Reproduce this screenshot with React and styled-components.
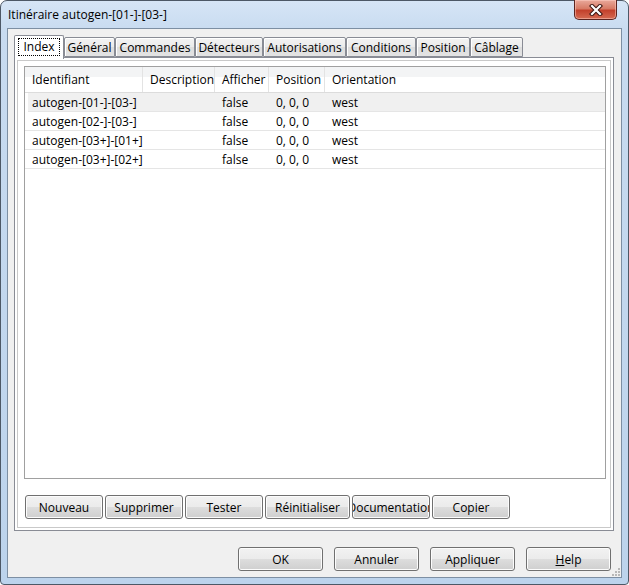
import React from "react";
import styled, { createGlobalStyle } from "styled-components";

const GlobalStyle = createGlobalStyle`
  html, body {
    margin: 0;
    padding: 0;
    background: #ffffff;
  }
  body {
    font-family: "Open Sans", "Liberation Sans", sans-serif;
    font-size: 11.5px;
    color: #000;
  }
  * { box-sizing: border-box; }
`;

const Window = styled.div`
  position: relative;
  width: 629px;
  height: 585px;
  display: flex;
  flex-direction: column;
  border: 1px solid #4d5866;
  border-radius: 7px 7px 4px 4px;
  background: linear-gradient(to bottom, #d6e5f6 0px, #c8dbf0 30px, #bcd3ec 100%);
`;

const TitleBar = styled.div`
  height: 27px;
  display: flex;
  align-items: flex-start;
  padding-left: 7px;
`;

const Title = styled.div`
  margin-top: 6px;
  font-size: 12px;
  line-height: 16px;
  white-space: nowrap;
`;

const CloseButton = styled.div`
  margin-left: auto;
  margin-right: 11px;
  margin-top: -1px;
  width: 43px;
  height: 20px;
  display: flex;
  align-items: center;
  justify-content: center;
  border: 1px solid #5b2420;
  border-top: none;
  border-radius: 0 0 5px 5px;
  background: linear-gradient(to bottom, #e9a99b 0%, #d77b66 45%, #c3412c 55%, #d56a52 100%);
  box-shadow: inset 0 0 0 1px rgba(255, 210, 200, 0.5);
`;

const Client = styled.div`
  position: relative;
  flex: 1;
  margin: 0 6px 6px 6px;
  border: 1px solid #7d8fa3;
  background: #f0f0f0;
  padding: 6px 7px 6px 6px;
  display: flex;
  flex-direction: column;
`;

const TabStrip = styled.div`
  height: 22px;
  display: flex;
  align-items: flex-end;
`;

const Tab = styled.div`
  position: relative;
  width: ${(p) => p.w}px;
  height: ${(p) => (p.active ? 24 : 20)}px;
  margin-bottom: ${(p) => (p.active ? -2 : 0)}px;
  z-index: ${(p) => (p.active ? 2 : 1)};
  display: flex;
  align-items: ${(p) => (p.active ? "flex-start" : "center")};
  padding-top: ${(p) => (p.active ? 2 : 0)}px;
  justify-content: center;
  border: 1px solid #898c95;
  border-bottom: ${(p) => (p.active ? "none" : "1px solid #898c95")};
  border-radius: 2px 2px 0 0;
  background: ${(p) =>
    p.active ? "#ffffff" : "linear-gradient(to bottom, #f3f3f3 0%, #ebebeb 50%, #dedede 51%, #e3e3e3 100%)"};
  box-shadow: inset 1px 1px 0 #ffffff;
  font-size: 12px;
  white-space: nowrap;
`;

const Focus = styled.span`
  border: 1px dotted #000;
  padding: 0 4px;
  line-height: 16px;
  height: 18px;
`;

const Pane = styled.div`
  height: 474px;
  display: flex;
  flex-direction: column;
  border: 1px solid #898c95;
  background: #ffffff;
  box-shadow: inset 0 0 0 2px #ffffff, inset 0 0 0 3px #c9c9c9;
  padding: 8px 7px 11px 9px;
`;

const Table = styled.div`
  height: 413px;
  border: 1px solid #a0a0a0;
  background: #fff;
  display: flex;
  flex-direction: column;
`;

const HeaderRow = styled.div`
  height: 26px;
  display: flex;
  border-bottom: 1px solid #dcdcdc;
  background: linear-gradient(to bottom, #f3f4f5 0%, #f3f4f5 40%, #ffffff 40%, #ffffff 100%);
`;

const HeaderCell = styled.div`
  width: ${(p) => (p.w ? `${p.w}px` : "auto")};
  flex: ${(p) => (p.w ? "none" : 1)};
  display: flex;
  align-items: center;
  padding-left: 7px;
  border-right: ${(p) => (p.w ? "1px solid #e3e3e3" : "none")};
  font-size: 12px;
  white-space: nowrap;
  overflow: hidden;
`;

const Row = styled.div`
  height: 19px;
  display: flex;
  border-bottom: 1px solid #e5e5e5;
  background: ${(p) => (p.selected ? "#f0f0f0" : "#ffffff")};
  margin-left: ${(p) => (p.selected ? 3 : 0)}px;
`;

const Cell = styled.div`
  width: ${(p) => (p.w ? `${p.w - (p.shift || 0)}px` : "auto")};
  flex: ${(p) => (p.w ? "none" : 1)};
  display: flex;
  align-items: center;
  padding-left: ${(p) => 7 - (p.shift || 0)}px;
  font-size: 12px;
  white-space: nowrap;
  overflow: hidden;
`;

const ButtonRow = styled.div`
  display: flex;
  gap: 2px;
  margin-top: 16px;
  padding-left: 1px;
`;

const Button = styled.div`
  width: ${(p) => p.w}px;
  height: 24px;
  display: flex;
  align-items: center;
  justify-content: center;
  border: 1px solid #707070;
  border-radius: 3px;
  background: linear-gradient(to bottom, #f2f2f2 0%, #ebebeb 50%, #dddddd 51%, #cfcfcf 100%);
  box-shadow: inset 0 0 0 1px #fcfcfc;
  font-size: 12px;
  white-space: nowrap;
  overflow: hidden;
`;

const Footer = styled.div`
  display: flex;
  justify-content: flex-end;
  gap: 11px;
  margin-top: 16px;
  padding-right: 3px;
`;

const Grip = styled.svg`
  position: absolute;
  right: 1px;
  bottom: 1px;
`;

const tabs = [
  { label: "Index", w: 50, active: true },
  { label: "Général", w: 51 },
  { label: "Commandes", w: 80 },
  { label: "Détecteurs", w: 68 },
  { label: "Autorisations", w: 83 },
  { label: "Conditions", w: 70 },
  { label: "Position", w: 54 },
  { label: "Câblage", w: 53 },
];

const columns = [
  { label: "Identifiant", w: 118 },
  { label: "Description", w: 72 },
  { label: "Afficher", w: 54 },
  { label: "Position", w: 56 },
  { label: "Orientation" },
];

const rows = [
  ["autogen-[01-]-[03-]", "", "false", "0, 0, 0", "west"],
  ["autogen-[02-]-[03-]", "", "false", "0, 0, 0", "west"],
  ["autogen-[03+]-[01+]", "", "false", "0, 0, 0", "west"],
  ["autogen-[03+]-[02+]", "", "false", "0, 0, 0", "west"],
];

const actions = [
  { label: "Nouveau", w: 78 },
  { label: "Supprimer", w: 78 },
  { label: "Tester", w: 78 },
  { label: "Réinitialiser", w: 85 },
  { label: "Documentation", w: 78 },
  { label: "Copier", w: 78 },
];

const CloseIcon = () => (
  <svg width="14" height="12" viewBox="0 0 14 12">
    <path d="M3 2 L11 10 M11 2 L3 10" stroke="#3a1410" strokeWidth="4.2" strokeLinecap="square" />
    <path d="M3 2 L11 10 M11 2 L3 10" stroke="#ffffff" strokeWidth="2.2" strokeLinecap="square" />
  </svg>
);

export default function App() {
  return (
    <>
      <GlobalStyle />
      <Window>
        <TitleBar>
          <Title>Itinéraire autogen-[01-]-[03-]</Title>
          <CloseButton>
            <CloseIcon />
          </CloseButton>
        </TitleBar>
        <Client>
          <TabStrip>
            {tabs.map((t) => (
              <Tab key={t.label} w={t.w} active={t.active}>
                {t.active ? <Focus>{t.label}</Focus> : t.label}
              </Tab>
            ))}
          </TabStrip>
          <Pane>
            <Table>
              <HeaderRow>
                {columns.map((c) => (
                  <HeaderCell key={c.label} w={c.w}>
                    {c.label}
                  </HeaderCell>
                ))}
              </HeaderRow>
              {rows.map((r, i) => (
                <Row key={r[0]} selected={i === 0}>
                  {r.map((v, j) => (
                    <Cell key={j} w={columns[j].w} shift={i === 0 && j === 0 ? 3 : 0}>
                      {v}
                    </Cell>
                  ))}
                </Row>
              ))}
            </Table>
            <ButtonRow>
              {actions.map((a) => (
                <Button key={a.label} w={a.w}>
                  {a.label}
                </Button>
              ))}
            </ButtonRow>
          </Pane>
          <Footer>
            <Button w={85}>OK</Button>
            <Button w={85}>Annuler</Button>
            <Button w={85}>Appliquer</Button>
            <Button w={85}>
              <span><u>H</u>elp</span>
            </Button>
          </Footer>
          <Grip width="8" height="8" viewBox="0 0 8 8">
            {[[6, 0], [6, 3], [3, 3], [6, 6], [3, 6], [0, 6]].map(([x, y]) => (
              <rect key={`${x}-${y}`} x={x} y={y} width="2" height="2" fill="#b8b8b8" />
            ))}
          </Grip>
        </Client>
      </Window>
    </>
  );
}
